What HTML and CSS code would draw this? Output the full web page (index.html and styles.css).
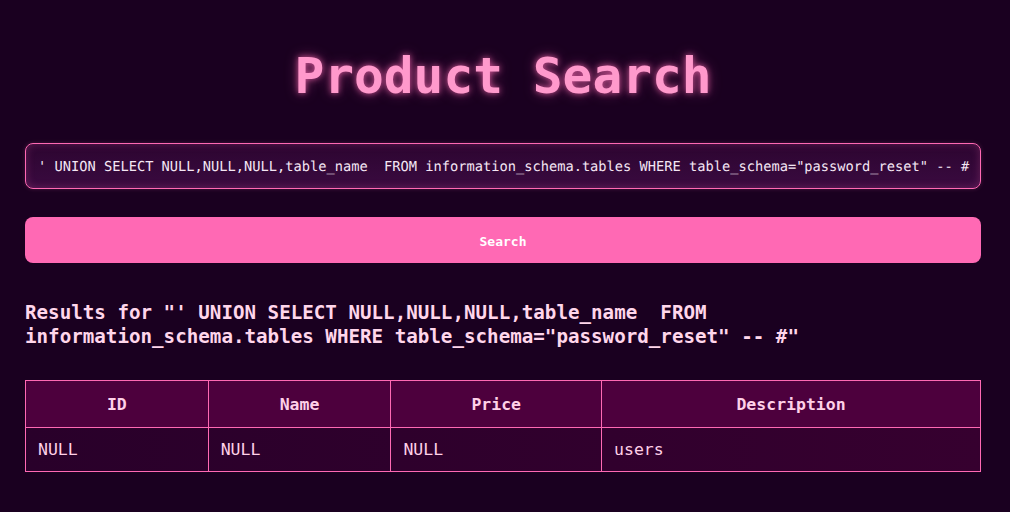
FILE: index.html
```html
<!DOCTYPE html>
<html lang="en">
<head>
<meta charset="utf-8">
<title>Product Search</title>
<link rel="stylesheet" href="styles.css">
</head>
<body>
<main class="page">
  <h1 class="title">Product Search</h1>
  <form class="search">
    <input class="search-input" type="text" value="' UNION SELECT NULL,NULL,NULL,table_name  FROM information_schema.tables WHERE table_schema=&quot;password_reset&quot; -- #">
    <button class="search-button" type="button">Search</button>
  </form>
  <h3 class="results-title">Results for "' UNION SELECT NULL,NULL,NULL,table_name  FROM information_schema.tables WHERE table_schema="password_reset" -- #"</h3>
  <table class="results">
    <thead>
      <tr><th>ID</th><th>Name</th><th>Price</th><th>Description</th></tr>
    </thead>
    <tbody>
      <tr><td>NULL</td><td>NULL</td><td>NULL</td><td>users</td></tr>
    </tbody>
  </table>
</main>
</body>
</html>
```

FILE: styles.css
```css
* { box-sizing: border-box; }

html, body {
  margin: 0;
  background: #1a0020;
}

body {
  font-family: "DejaVu Sans Mono", "Liberation Mono", monospace;
  color: #ffd6eb;
}

.page {
  padding: 0 29px 0 25px;
  display: flex;
  flex-direction: column;
}

.title {
  margin: 47px 0 0;
  text-align: center;
  font-size: 49.5px;
  font-weight: bold;
  line-height: 58px;
  color: #ff99cc;
  text-shadow: 0 0 6px rgba(255, 105, 180, 0.75), 0 0 14px rgba(255, 105, 180, 0.35);
}

.search {
  margin-top: 38px;
  display: flex;
  flex-direction: column;
  gap: 28px;
}

.search-input {
  height: 46px;
  width: 100%;
  padding: 1px 10px 0 12px;
  border: 1px solid #ff69b4;
  border-radius: 8px;
  background: linear-gradient(180deg, #2c0530 0%, #3a0a40 100%);
  box-shadow: inset 0 0 8px rgba(255, 105, 180, 0.25), 0 0 4px rgba(255, 105, 180, 0.2);
  color: #f4e6f4;
  font-family: "DejaVu Sans Mono", monospace;
  font-size: 13.7px;
  line-height: 1.5;
  text-rendering: geometricPrecision;
  outline: none;
}

.search-button {
  height: 46px;
  width: 100%;
  padding: 2px 0 0;
  border: none;
  border-radius: 8px;
  background: #ff69b4;
  color: #ffffff;
  font-family: "DejaVu Sans Mono", monospace;
  font-size: 13px;
  font-weight: bold;
}

.results-title {
  margin: 38px 0 0;
  font-size: 19.2px;
  font-weight: bold;
  line-height: 24px;
  white-space: pre-wrap;
  color: #ffd6eb;
}

.results {
  margin-top: 31px;
  width: 100%;
  border-collapse: collapse;
  font-size: 16.5px;
  color: #ffd0e8;
}

.results th,
.results td {
  border: 1px solid #ff69b4;
  line-height: 19px;
}

.results th {
  padding: 14px 12px 13px;
  background: #4d003d;
  font-weight: bold;
  text-align: center;
}

.results td {
  padding: 12px;
  text-align: left;
}

.results tbody tr {
  background: linear-gradient(90deg, #29002a 0%, #36002f 100%);
}
```
